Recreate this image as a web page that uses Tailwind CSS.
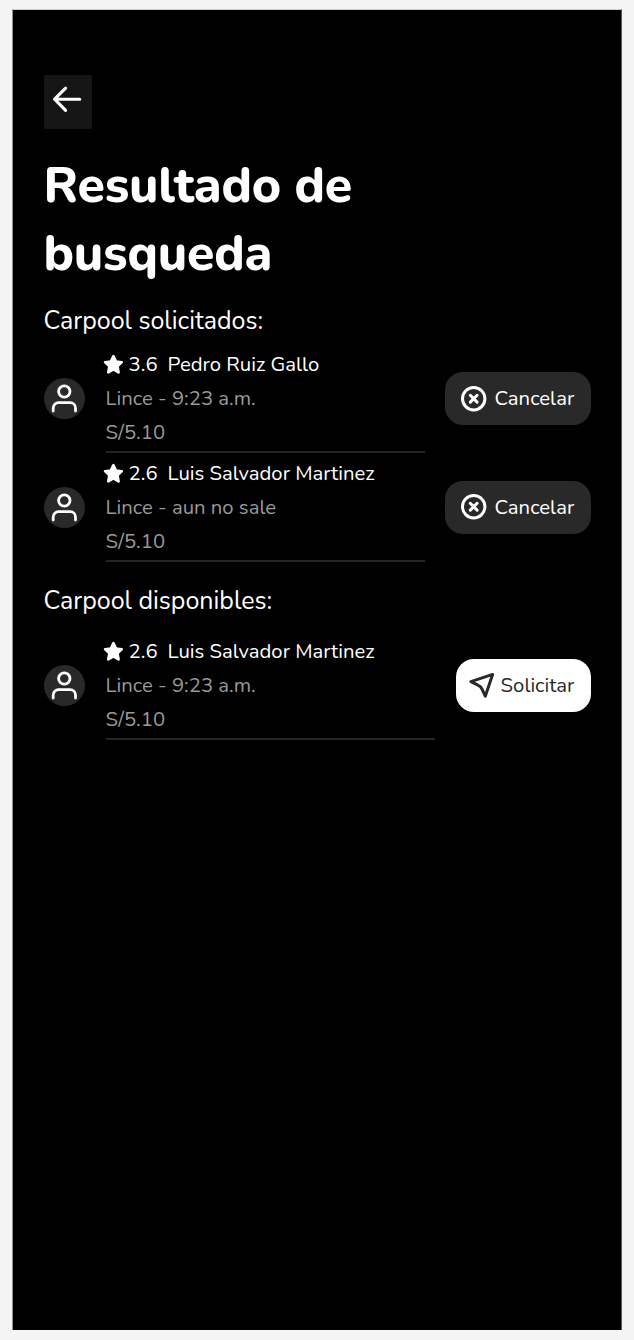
<!DOCTYPE html>
<html lang="es">
<head>
<meta charset="utf-8">
<title>Resultado de busqueda</title>
<script src="https://cdn.jsdelivr.net/npm/@tailwindcss/browser@4"></script>
</head>
<body class="bg-[#f4f4f4] h-[1340px] overflow-hidden pt-[9px] pl-[12px] font-[Nunito,Lato,sans-serif]">
<svg class="hidden">
  <symbol id="user" viewBox="0 0 28 30"><g fill="none" stroke="#fff" stroke-width="2.8" stroke-linecap="round" stroke-linejoin="round"><circle cx="14.300" cy="7.500" r="5.700"/><path d="M3.200 27.100v-3a5.400 5.400 0 0 1 5.400-5.400h11.500a5.400 5.400 0 0 1 5.400 5.400v3"/></g></symbol>
  <symbol id="star" viewBox="0 0 20 20"><path fill="#fff" stroke="#fff" stroke-width="2.4" stroke-linejoin="round" d="M9.700 2l2.300 4.900 5.500.7-4 3.800 1 5.700L9.700 14.400l-4.800 2.700 1-5.700-4-3.800 5.500-.7z"/></symbol>
  <symbol id="cancel" viewBox="0 0 26 26"><g fill="none" stroke="#fff" stroke-width="3" stroke-linecap="round"><circle cx="12.700" cy="12.700" r="11.200"/><path d="M9.300 9.300l6.800 6.800M16.100 9.300l-6.800 6.800"/></g></symbol>
</svg>
<div class="w-[610px] h-[1321px] bg-black border-t border-x border-t-[#ccc] border-l-[#8f8f8f] border-r-[#5a5a5a] pl-[30.600px] pr-[30.400px] pt-[64.800px] text-white text-[20.3125px]">
  <div class="w-[48px] h-[54px] bg-[#151515] pl-[8px] pt-[10px]">
    <svg class="w-[32px] h-[28px]" viewBox="0 0 32 28" fill="none" stroke="#fff" stroke-width="3.100" stroke-linecap="round" stroke-linejoin="round"><path d="M27.800 14.200H2.600M13.600 3.200L2.600 14.200l11 11.200"/></svg>
  </div>
  <h1 class="mt-[23px] h-[136px] text-[50px] leading-[68px] font-extrabold tracking-[-0.250px]"><span class="block">Resultado de</span><span class="block">busqueda</span></h1>
  <h2 class="mt-[16.400px] h-[34px] text-[25px] leading-[34px]">Carpool solicitados:</h2>
  <div class="mt-[6.200px] flex h-[108.500px] items-center">
    <div class="w-[41.600px] h-[41.600px] rounded-full bg-[#292929] flex justify-center pt-[6px]"><svg class="w-[28px] h-[30px]"><use href="#user"/></svg></div>
    <div class="ml-[20.400px] w-[319.500px] h-[108.500px] border-b-2 border-[#242424] leading-[34px] pt-[2.800px] text-[#999]">
      <div class="flex items-center text-white h-[34px] -ml-[3px]"><svg class="w-[21.500px] h-[21.500px] mr-[4.500px] mt-[2px]"><use href="#star"/></svg><span class="w-[39px]">3.6</span><span>Pedro Ruiz Gallo</span></div>
      <div>Lince - 9:23 a.m.</div><div>S/5.10</div>
    </div>
    <div class="ml-auto w-[145.600px] h-[52.400px] rounded-[18px] bg-[#292929] flex items-center pl-[15.500px]"><svg class="w-[26px] h-[26px] mr-[8px]"><use href="#cancel"/></svg><span>Cancelar</span></div>
  </div>
  <div class="flex h-[108.900px] items-center">
    <div class="w-[41.600px] h-[41.600px] rounded-full bg-[#292929] flex justify-center pt-[6px]"><svg class="w-[28px] h-[30px]"><use href="#user"/></svg></div>
    <div class="ml-[20.400px] w-[319.500px] h-[108.900px] border-b-2 border-[#242424] leading-[34px] pt-[2.800px] text-[#999]">
      <div class="flex items-center text-white h-[34px] -ml-[3px]"><svg class="w-[21.500px] h-[21.500px] mr-[4.500px] mt-[2px]"><use href="#star"/></svg><span class="w-[39px]">2.6</span><span>Luis Salvador Martinez</span></div>
      <div>Lince - aun no sale</div><div>S/5.10</div>
    </div>
    <div class="ml-auto w-[145.600px] h-[52.400px] rounded-[18px] bg-[#292929] flex items-center pl-[15.500px]"><svg class="w-[26px] h-[26px] mr-[8px]"><use href="#cancel"/></svg><span>Cancelar</span></div>
  </div>
  <h2 class="mt-[22.200px] h-[34px] text-[25px] leading-[34px]">Carpool disponibles:</h2>
  <div class="mt-[13.200px] flex h-[108.500px] items-center">
    <div class="w-[41.600px] h-[41.600px] rounded-full bg-[#292929] flex justify-center pt-[6px]"><svg class="w-[28px] h-[30px]"><use href="#user"/></svg></div>
    <div class="ml-[20.400px] w-[329.900px] h-[108.500px] border-b-2 border-[#242424] leading-[34px] pt-[2.800px] text-[#999]">
      <div class="flex items-center text-white h-[34px] -ml-[3px]"><svg class="w-[21.500px] h-[21.500px] mr-[4.500px] mt-[2px]"><use href="#star"/></svg><span class="w-[39px]">2.6</span><span>Luis Salvador Martinez</span></div>
      <div>Lince - 9:23 a.m.</div><div>S/5.10</div>
    </div>
    <div class="ml-auto w-[135px] h-[52.400px] rounded-[18px] bg-white text-[#292929] flex items-center pl-[13.500px]"><svg class="w-[26px] h-[26px] mr-[5.500px]" viewBox="0 0 26 26" fill="none" stroke="#292929" stroke-width="3" stroke-linejoin="round"><path d="M23.600 2.400L1.900 9.600l6.600 3.200Q12 14.300 13.200 17.500l3.100 6.700z"/></svg><span>Solicitar</span></div>
  </div>
</div>
</body>
</html>
